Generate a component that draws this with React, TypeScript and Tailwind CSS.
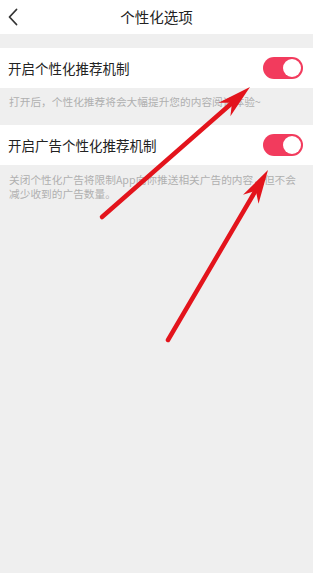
import React from "react";

function Toggle() {
  return (
    <div className="w-[40px] h-[22px] rounded-full bg-[#f23b5d] flex items-center justify-end pr-[2px]">
      <div className="w-[18px] h-[18px] rounded-full bg-white" />
    </div>
  );
}

function arrowHead(tx: number, ty: number, fx: number, fy: number) {
  const dx = tx - fx;
  const dy = ty - fy;
  const len = Math.hypot(dx, dy);
  const ux = dx / len;
  const uy = dy / len;
  const px = -uy;
  const py = ux;
  const back = 34;
  const notch = 24;
  const hw = 9;
  const bx = tx - ux * back;
  const by = ty - uy * back;
  const nx = tx - ux * notch;
  const ny = ty - uy * notch;
  return `${tx},${ty} ${bx + px * hw},${by + py * hw} ${nx},${ny} ${bx - px * hw},${by - py * hw}`;
}

export default function App() {
  const font = { fontFamily: '"Noto Sans CJK SC", "Noto Sans", sans-serif' };
  return (
    <div className="relative w-[313px] h-[573px] bg-[#efefef] overflow-hidden" style={font}>
      <div className="h-[34px] bg-white flex items-center relative">
        <svg className="absolute left-[7px] top-[8px]" width="12" height="18" viewBox="0 0 12 18">
          <path d="M9.5 1.5 L2.5 9 L9.5 16.5" fill="none" stroke="#333" strokeWidth="1.8" strokeLinecap="round" strokeLinejoin="round" />
        </svg>
        <div className="flex-1 text-center text-[14.5px] text-[#222]">个性化选项</div>
      </div>
      <div className="h-[14px]" />
      <div className="h-[40px] bg-white flex items-center justify-between pl-[8px] pr-[10px]">
        <span className="text-[13.5px] text-[#222]">开启个性化推荐机制</span>
        <Toggle />
      </div>
      <div className="px-[9px] pt-[7px] pb-[16px] text-[10.7px] leading-[14px] text-[#b0b0b0]">
        打开后，个性化推荐将会大幅提升您的内容阅读体验~
      </div>
      <div className="h-[40px] bg-white flex items-center justify-between pl-[8px] pr-[10px]">
        <span className="text-[13.5px] text-[#222]">开启广告个性化推荐机制</span>
        <Toggle />
      </div>
      <div className="pl-[9px] pr-[2px] pt-[8px] text-[10.7px] leading-[14px] text-[#b0b0b0] whitespace-nowrap flex flex-col">
        <div>关闭个性化广告将限制App向你推送相关广告的内容，但不会</div>
        <div>减少收到的广告数量。</div>
      </div>
      <svg className="absolute left-0 top-0 pointer-events-none" width="313" height="573" viewBox="0 0 313 573">
        <line x1="102" y1="217" x2="232" y2="103" stroke="#e3141c" strokeWidth="4.5" strokeLinecap="round" />
        <polygon points={arrowHead(250, 87, 102, 217)} fill="#e3141c" />
        <line x1="168" y1="340" x2="256" y2="190" stroke="#e3141c" strokeWidth="4.5" strokeLinecap="round" />
        <polygon points={arrowHead(268, 170, 168, 340)} fill="#e3141c" />
      </svg>
    </div>
  );
}
